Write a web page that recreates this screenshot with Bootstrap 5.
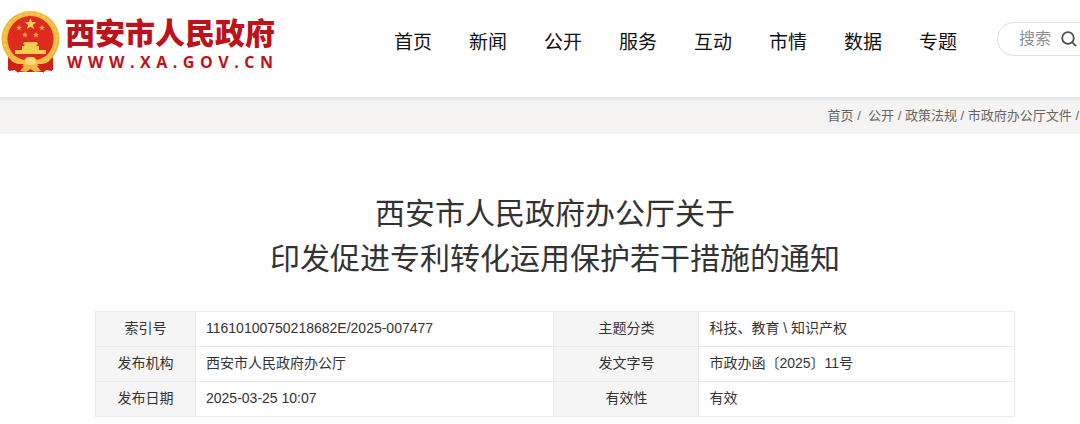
<!DOCTYPE html>
<html lang="zh-CN">
<head>
<meta charset="utf-8">
<meta name="viewport" content="width=device-width, initial-scale=1">
<title>西安市人民政府办公厅关于印发促进专利转化运用保护若干措施的通知</title>
<link href="https://cdn.jsdelivr.net/npm/bootstrap@5.3.0/dist/css/bootstrap.min.css" rel="stylesheet">
<style>
body { font-family: "Liberation Sans", "Noto Sans CJK SC", sans-serif; color: #333; background: #fff; overflow-x: hidden; }
a { color: inherit; text-decoration: none; }
.site-header { padding: 8px 0 21px; }
.emblem { width: 60px; height: 66px; margin-right: 5px; }
.site-name { font-size: 30px; line-height: 32px; font-weight: 900; color: #bd1219; }
.site-url { font-family: "Open Sans", sans-serif; font-size: 16px; line-height: 24px; font-weight: 700; color: #bd1219; padding: 0 2px; }
.site-title { padding: 10px 0 2px; }
.main-nav { gap: 37px; font-size: 19px; line-height: 28px; color: #111; padding-top: 8px; }
.site-tools { height: 62px; }
.search-box { width: 104px; height: 34px; margin-right: -21px; border: 1px solid #dedfe1; border-radius: 17px; padding-left: 21px; }
.search-box input { width: 42px; font-size: 16px; line-height: 24px; color: #333; }
.search-box input::placeholder { color: #8c8f94; opacity: 1; }
.crumb-bar { background: #f5f4f2; border-top: 3px solid #e6e7eb; height: 37px; font-size: 13px; color: #666; padding: 0 1px 2px 0; }
.notice { padding: 57px 65px 0 95px; }
.notice h1 { font-size: 30px; line-height: 45px; font-weight: 400; margin-bottom: 30px; }
.meta-table { table-layout: fixed; font-size: 14px; line-height: 20px; border-color: #ebebeb; }
.meta-table th, .meta-table td { height: 35px; padding: 6px 10px 8px; color: #333; vertical-align: middle; }
.meta-table th { background: #f5f5f5; font-weight: 400; text-align: center; }
.col-a { width: 100px; }
.col-b { width: 39%; }
.col-c { width: 145px; }
</style>
</head>
<body>
<header class="site-header d-flex align-items-start justify-content-between">
  <a href="#" class="d-flex align-items-start" aria-label="西安市人民政府">
    <svg class="emblem" viewBox="0 0 60 66" aria-hidden="true">
      <path d="M8 44 L9 63 L15 62 L18 64 L43 64 L46 62 L52 63 L53 44Z" fill="#cf2119"/>
      <ellipse cx="30.500" cy="31" rx="29" ry="28" fill="#efb93d"/>
      <ellipse cx="30.500" cy="31" rx="26" ry="25.500" fill="none" stroke="#f5c954" stroke-width="2" stroke-dasharray="4 2"/>
      <circle cx="30.500" cy="31" r="23" fill="#df2a1e"/>
      <path d="M30.500 10l1.500 4 4.300.2-3.400 2.700 1.200 4.200-3.600-2.400-3.600 2.400 1.200-4.200-3.400-2.700 4.300-.2z" fill="#f8cf52"/>
      <g fill="#f3ad3c"><path d="M19 17l.8 1.700 2 .2-1.400 1.300.3 2-1.700-1-1.700 1 .3-2-1.400-1.300 2-.2zM42 17l.8 1.700 2 .2-1.400 1.300.3 2-1.700-1-1.700 1 .3-2-1.400-1.300 2-.2zM25 24l.8 1.700 2 .2-1.400 1.300.3 2-1.700-1-1.700 1 .3-2-1.400-1.300 2-.2zM36 24l.8 1.700 2 .2-1.400 1.300.3 2-1.700-1-1.700 1 .3-2-1.400-1.300 2-.2z"/></g>
      <path d="M24 34h13l1 2.500h-1.500V38H39v4h7v4H15v-4h7v-4h2.500v-1.500H23z" fill="#f9cd51"/>
      <path d="M9 48c7-1 10 3 15 4l3-3h7l3 3c5-1 8-5 15-4-2 7-8 9-14 8l-4 3h-7l-4-3c-6 1-12-1-14-8z" fill="#f0bd45"/>
      <path d="M26 51l4.500-2 4.500 2 1 4-5.500 3-5.500-3z" fill="#f9d97c"/>
      <path d="M8 50c5 7 11 6 16 6l-5 4-1 5-4-4-6 1zM53 50c-5 7-11 6-16 6l5 4 1 5 4-4 6 1z" fill="#cf2119"/>
      <path d="M20 63l4-5 6.500-1 6.500 1 4 5-6 1-4.500-3-4.500 3z" fill="#eeb73e"/>
    </svg>
    <span class="site-title d-block">
      <span class="site-name d-block">西安市人民政府</span>
      <span class="site-url d-flex justify-content-between" aria-label="WWW.XA.GOV.CN"><span>W</span><span>W</span><span>W</span><span>.</span><span>X</span><span>A</span><span>.</span><span>G</span><span>O</span><span>V</span><span>.</span><span>C</span><span>N</span></span>
    </span>
  </a>
  <div class="site-tools d-flex align-items-center">
    <nav class="main-nav d-flex me-4">
      <a href="#">首页</a><a href="#">新闻</a><a href="#">公开</a><a href="#">服务</a><a href="#">互动</a><a href="#">市情</a><a href="#">数据</a><a href="#">专题</a>
    </nav>
    <form class="search-box d-flex align-items-center ms-3">
      <input type="text" class="border-0 p-0 bg-transparent" placeholder="搜索" aria-label="搜索">
      <button type="button" class="btn border-0 p-0 d-flex" aria-label="提交搜索">
        <svg width="16" height="16" viewBox="0 0 16 16" fill="none" stroke="#4b4d51" stroke-width="1.800" aria-hidden="true"><circle cx="7" cy="7" r="5.800"/><path d="M11 11l4 4.200"/></svg>
      </button>
    </form>
  </div>
</header>
<nav class="crumb-bar d-flex align-items-center justify-content-end" aria-label="当前位置">
  <div><a href="#">首页</a> /&nbsp; <a href="#">公开</a> / <a href="#">政策法规</a> / <a href="#">市政府办公厅文件</a> /</div>
</nav>
<main class="notice">
  <h1 class="text-center">西安市人民政府办公厅关于<br>印发促进专利转化运用保护若干措施的通知</h1>
  <table class="meta-table table table-bordered mb-0">
    <colgroup><col class="col-a"><col class="col-b"><col class="col-c"><col></colgroup>
    <tbody>
      <tr><th scope="row">索引号</th><td>11610100750218682E/2025-007477</td><th scope="row">主题分类</th><td>科技、教育 \ 知识产权</td></tr>
      <tr><th scope="row">发布机构</th><td>西安市人民政府办公厅</td><th scope="row">发文字号</th><td>市政办函〔2025〕11号</td></tr>
      <tr><th scope="row">发布日期</th><td>2025-03-25 10:07</td><th scope="row">有效性</th><td>有效</td></tr>
    </tbody>
  </table>
</main>
<script src="https://cdn.jsdelivr.net/npm/bootstrap@5.3.0/dist/js/bootstrap.bundle.min.js"></script>
</body>
</html>
